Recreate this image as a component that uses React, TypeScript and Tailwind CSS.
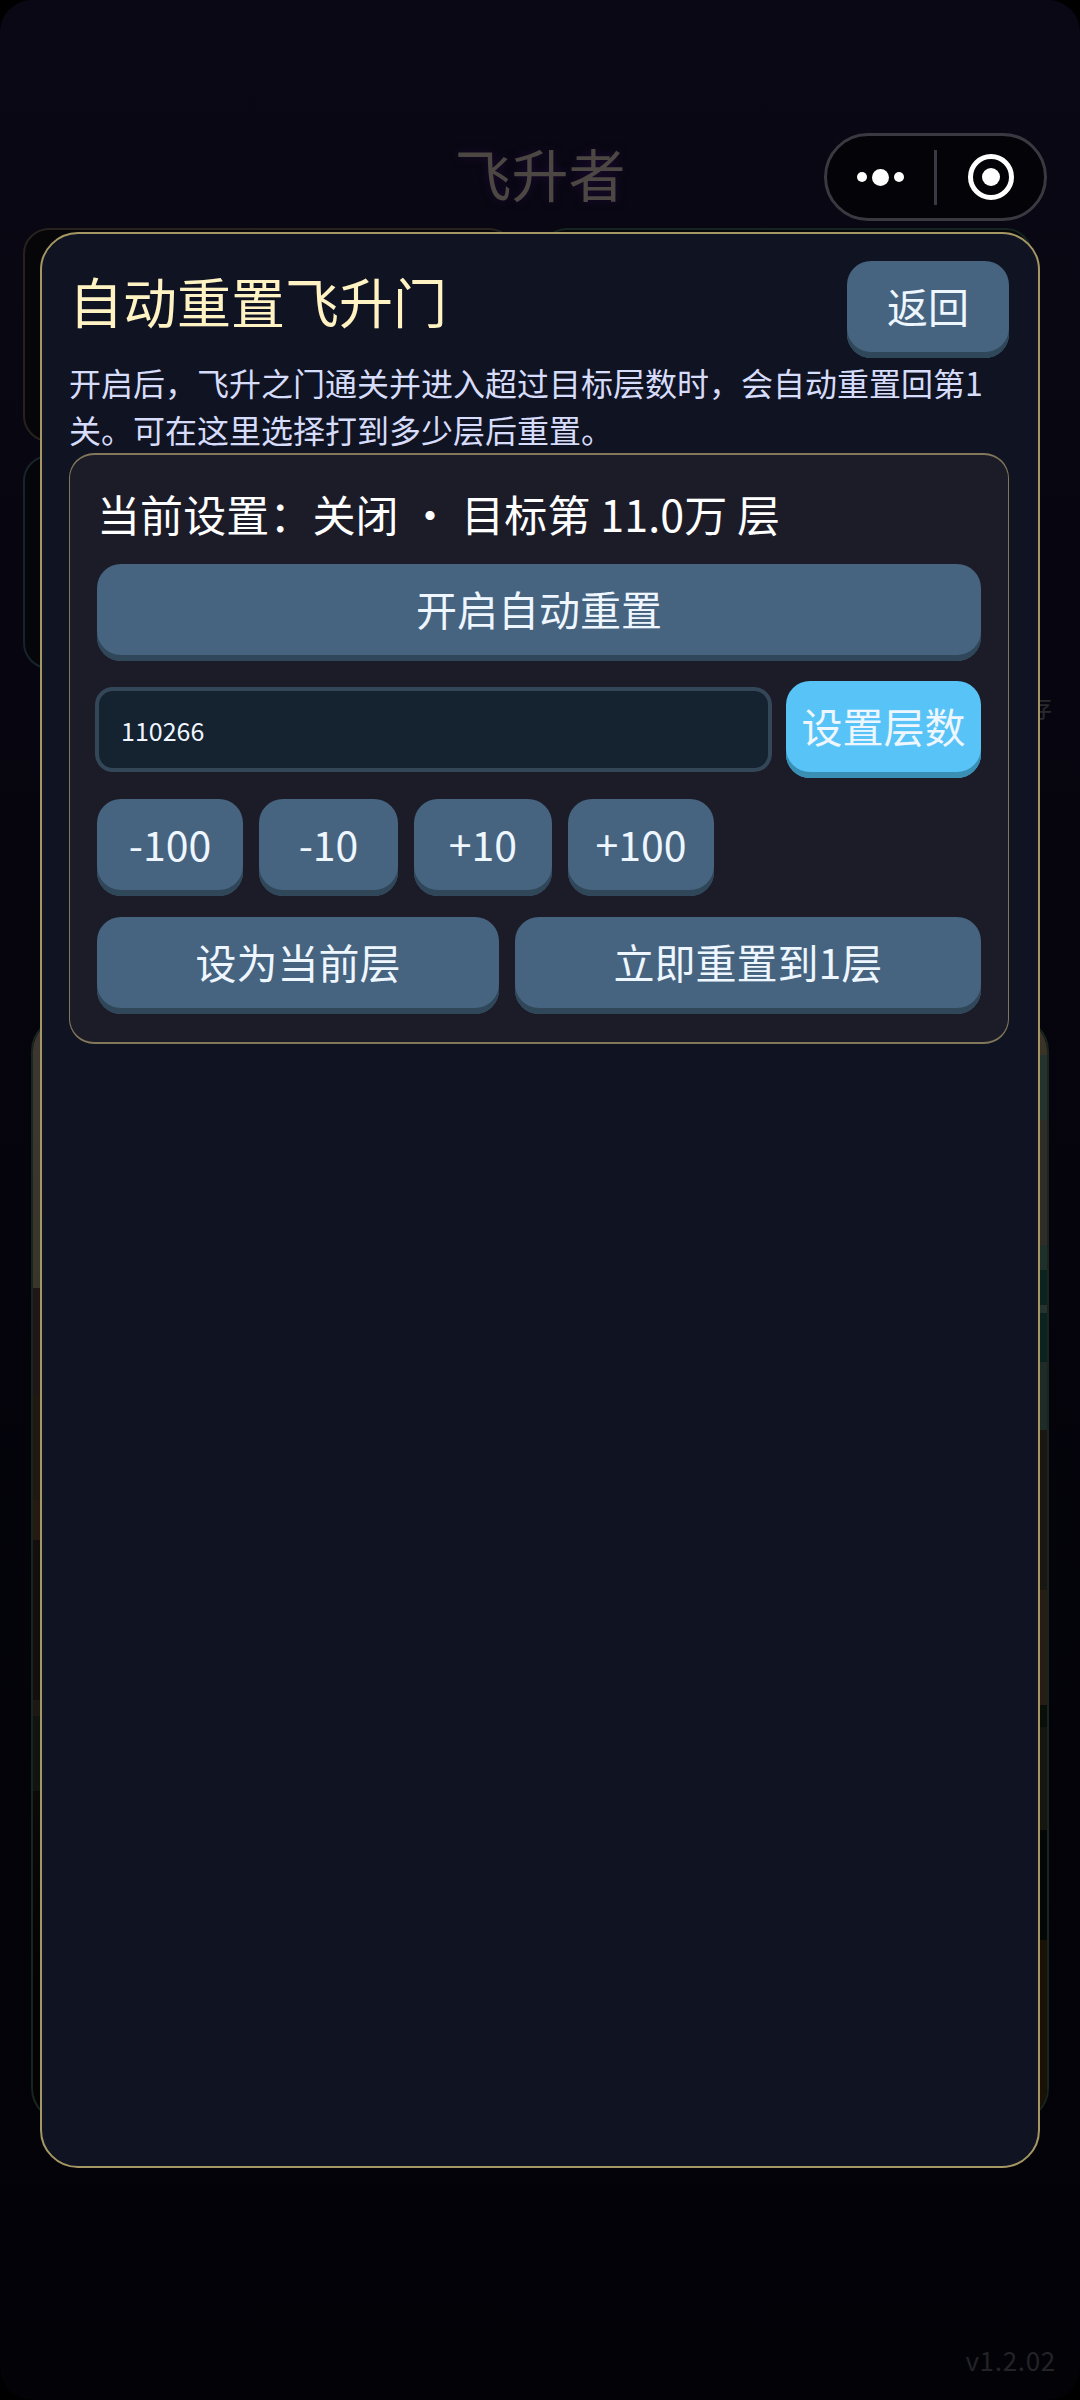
import { ReactNode } from 'react';
import clsx from 'clsx';

export default function App() {
  return (
    <div className="bg-black">
      <div className="relative h-[2400px] w-[1080px] overflow-hidden rounded-[32px] bg-linear-to-b from-[#0a0814] via-[#05040c] via-50% to-[#020207] font-['Noto_Sans_CJK_SC',sans-serif]">
        <GamePage />
        <MiniProgramCapsule />
        <AutoResetDialog />
      </div>
    </div>
  );
}

// Dimmed page that stays visible around the dialog
function GamePage() {
  return (
    <div className="flex h-full flex-col">
      <h1 className="mt-[134px] text-center text-[57px] leading-[76px] text-[#4c4742] [text-shadow:0_0_10px_#1c0b33]">
        飞升者
      </h1>

      <div className="mt-[18px] grid grid-cols-2 gap-x-[26px] gap-y-[13px] pr-[48px] pl-[23px]">
        <div className="h-[214px] rounded-[26px] border-2 border-[#28221f] bg-[#060608]" />
        <div className="h-[214px] rounded-[26px] border-2 border-[#132421] bg-[#060608]" />
        <div className="h-[214px] rounded-[26px] border-2 border-[#18242b] bg-[#04060a]" />
      </div>

      <p className="mt-[20px] pr-[28px] text-right text-[24px] leading-[36px] text-[#2a2a2e]">自动保存</p>

      <div className="mx-[31px] mt-[292px] flex h-[1105px] justify-between overflow-hidden rounded-[34px] border-2 border-[#19251f] bg-[#030303]">
        <div className="flex w-[12px] flex-col">
          <div className="h-[269px] bg-linear-to-b from-[#3d3632] to-[#38362a]" />
          <div className="h-[107px] bg-[#201616]" />
          <div className="h-[105px] bg-[#1f1912]" />
          <div className="h-[40px] bg-[#261b12]" />
          <div className="h-[160px] bg-[#130f0e]" />
          <div className="h-[16px] bg-[#1c1814]" />
          <div className="h-[75px] bg-[#121411]" />
          <div className="h-[200px] bg-linear-to-b from-[#0a0a09] to-[#030303]" />
        </div>
        <div className="flex w-[12px] flex-col">
          <div className="h-[36px] bg-[#3a3328]" />
          <div className="h-[65px] bg-[#25332e]" />
          <div className="h-[125px] bg-[#302c27]" />
          <div className="h-[25px] bg-[#1e3029]" />
          <div className="h-[35px] bg-[#0b221f]" />
          <div className="h-[8px] bg-[#24332e]" />
          <div className="h-[49px] bg-[#0b221f]" />
          <div className="h-[68px] bg-[#1f2b26]" />
          <div className="h-[160px] bg-[#1a1612]" />
          <div className="h-[115px] bg-[#261e15]" />
          <div className="h-[22px] bg-[#0a0f0a]" />
          <div className="h-[103px] bg-[#14160f]" />
          <div className="h-[110px] bg-[#040705]" />
          <div className="flex-1 bg-[#1a1206]" />
        </div>
      </div>

      <p className="mt-auto mb-[20px] pr-[24px] text-right text-[26px] leading-[40px] tracking-[0.7px] text-[#232328]">
        v1.2.02
      </p>
    </div>
  );
}

function MiniProgramCapsule() {
  return (
    <div className="absolute top-[133px] left-[824px] flex h-[88px] w-[223px] items-center rounded-full border-3 border-[#3a3840] bg-[#040408]">
      <div className="flex flex-1 items-center justify-center gap-[5px] pr-px">
        <span className="size-[10px] rounded-full bg-white" />
        <span className="size-[17px] rounded-full bg-white" />
        <span className="size-[10px] rounded-full bg-white" />
      </div>
      <div className="h-[55px] w-[3px] bg-[#3a3840]" />
      <div className="flex flex-1 items-center justify-center pl-px">
        <div className="flex size-[46px] items-center justify-center rounded-full border-5 border-white">
          <span className="size-[18px] rounded-full bg-white" />
        </div>
      </div>
    </div>
  );
}

function AutoResetDialog() {
  return (
    <div className="absolute top-[232px] left-[40px] h-[1936px] w-[1000px] rounded-[38px] border-2 border-[#a59764] bg-[#101422] p-[27px]">
      <div className="flex h-[98px] w-[940px] items-start justify-between">
        <h2 className="text-[54px] leading-[80px] text-[#fff3c4]">自动重置飞升门</h2>
        <Button className="w-[162px]">返回</Button>
      </div>
      <p className="w-[940px] text-[32px] leading-[47px] text-[#d6dcfa]">
        开启后，飞升之门通关并进入超过目标层数时，会自动重置回第1关。可在这里选择打到多少层后重置。
      </p>

      <div className="h-[591px] w-[940px] rounded-[25px] border-x border-y-2 border-[#82775a] bg-[#1c1c29] p-[27px]">
        <p className="h-[82px] text-[43px] leading-[62px] tracking-[0.1px] text-white">
          当前设置：关闭 · 目标第 11.0万 层
        </p>
        <Button className="w-full">开启自动重置</Button>

        <div className="mt-[20px] flex items-center gap-[14px]">
          <input
            className="-ml-[2px] h-[85px] w-[677px] rounded-[18px] border-4 border-[#344758] bg-[#152230] px-[22px] text-[25px] text-[#f0f6ff] outline-none"
            defaultValue="110266"
          />
          <Button variant="primary" className="flex-1">
            设置层数
          </Button>
        </div>

        <div className="mt-[21px] flex gap-[16px]">
          <Button className="w-[146px]">-100</Button>
          <Button className="w-[139px]">-10</Button>
          <Button className="w-[138px]">+10</Button>
          <Button className="w-[146px]">+100</Button>
        </div>

        <div className="mt-[21px] flex gap-[16px]">
          <Button className="w-[402px]">设为当前层</Button>
          <Button className="flex-1">立即重置到1层</Button>
        </div>
      </div>
    </div>
  );
}

function Button({
  children,
  className,
  variant = 'default',
}: {
  children: ReactNode;
  className?: string;
  variant?: 'default' | 'primary';
}) {
  return (
    <button
      className={clsx(
        'flex h-[97px] items-center justify-center rounded-[24px] pb-[8px] text-[41px] leading-none whitespace-nowrap text-[#eef6ff]',
        variant === 'primary'
          ? 'bg-[#58c3f6] shadow-[inset_0_-6px_0_#3a8fb5]'
          : 'bg-[#46647f] shadow-[inset_0_-6px_0_#304759]',
        className,
      )}
    >
      {children}
    </button>
  );
}
